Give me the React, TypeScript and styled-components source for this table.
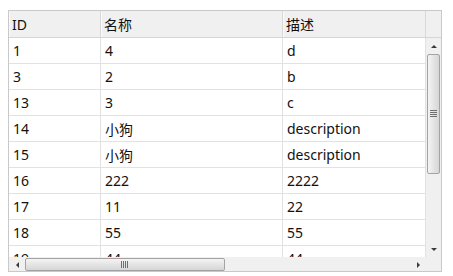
import React from "react";
import styled, { createGlobalStyle } from "styled-components";

const Global = createGlobalStyle`
  html, body { margin: 0; padding: 0; background: #ffffff; }
  body { font-family: "Noto Sans", "Noto Sans CJK SC", sans-serif; }
`;

const Page = styled.div`
  padding: 10px 11px 4px 8px;
`;

const Frame = styled.div`
  width: 434px;
  height: 262px;
  box-sizing: border-box;
  border: 1px solid #c9c9c9;
  display: grid;
  grid-template-columns: 417px 15px;
  grid-template-rows: 27px 219px 14px;
  overflow: hidden;
  background: #fff;
`;

const cols = "92px 182px 143px";

const HeaderRow = styled.div`
  display: grid;
  grid-template-columns: ${cols};
  background: #f0f0f0;
  border-bottom: 1px solid #d5d5d5;
`;

const HeaderCell = styled.div`
  border-right: 1px solid #d8d8d8;
  box-shadow: inset 1px 0 0 #fafafa;
  padding: 0 3px;
  display: flex;
  align-items: center;
  font-size: 14px;
  color: #111;
`;

const HeaderCorner = styled.div`
  background: #f0f0f0;
  border-bottom: 1px solid #d5d5d5;
`;

const Body = styled.div`
  overflow: hidden;
`;

const Row = styled.div`
  display: grid;
  grid-template-columns: ${cols};
  height: 26px;
  box-sizing: border-box;
  border-bottom: 1px solid #e2e2e2;
`;

const Cell = styled.div`
  border-right: 1px solid #e2e2e2;
  padding: 0 4px;
  display: flex;
  align-items: center;
  font-size: 14px;
  color: #111;
  white-space: nowrap;
`;

const VBar = styled.div`
  display: grid;
  grid-template-rows: 16px 1fr 16px;
  background: #f0f0f0;
`;

const VTrack = styled.div`
  padding: 0 1px 0 1px;
`;

const VThumb = styled.div`
  height: 120px;
  box-sizing: border-box;
  border: 1px solid #a3a3a3;
  border-radius: 2px;
  background: linear-gradient(to right, #f4f4f4 0%, #e6e6e6 45%, #d6d6d6 100%);
  display: flex;
  align-items: center;
  justify-content: center;
`;

const HBar = styled.div`
  display: grid;
  grid-template-columns: 16px 1fr 16px;
  background: #f0f0f0;
`;

const HTrack = styled.div`
  padding: 1px 0 0 0;
`;

const HThumb = styled.div`
  width: 200px;
  height: 13px;
  box-sizing: border-box;
  border: 1px solid #a3a3a3;
  border-radius: 2px;
  background: linear-gradient(to bottom, #f4f4f4 0%, #e6e6e6 45%, #d6d6d6 100%);
  display: flex;
  align-items: center;
  justify-content: center;
`;

const ArrowBox = styled.div`
  display: flex;
  align-items: center;
  justify-content: center;
`;

const Corner = styled.div`
  background: #f0f0f0;
`;

type Dir = "up" | "down" | "left" | "right";

const Arrow = ({ dir }: { dir: Dir }) => {
  const pts: Record<Dir, string> = {
    up: "1,5 4,2 7,5",
    down: "1,2 4,5 7,2",
    left: "5,1 2,4 5,7",
    right: "2,1 5,4 2,7",
  };
  return (
    <ArrowBox>
      <svg width="7" height="7" viewBox="0 0 7 7">
        <polygon points={pts[dir]} fill="#3a3a3a" />
      </svg>
    </ArrowBox>
  );
};

const Grip = ({ vertical }: { vertical: boolean }) =>
  vertical ? (
    <svg width="7" height="8" viewBox="0 0 7 8">
      {[0, 2, 4, 6].map((y) => (
        <rect key={y} x="0" y={y} width="7" height="1" fill="#6e6e6e" />
      ))}
    </svg>
  ) : (
    <svg width="8" height="7" viewBox="0 0 8 7">
      {[0, 2, 4, 6].map((x) => (
        <rect key={x} x={x} y="0" width="1" height="7" fill="#6e6e6e" />
      ))}
    </svg>
  );

const rows: [string, string, string][] = [
  ["1", "4", "d"],
  ["3", "2", "b"],
  ["13", "3", "c"],
  ["14", "小狗", "description"],
  ["15", "小狗", "description"],
  ["16", "222", "2222"],
  ["17", "11", "22"],
  ["18", "55", "55"],
  ["19", "44", "44"],
];

export default function App() {
  return (
    <Page>
      <Global />
      <Frame>
        <HeaderRow>
          <HeaderCell>ID</HeaderCell>
          <HeaderCell>名称</HeaderCell>
          <HeaderCell>描述</HeaderCell>
        </HeaderRow>
        <HeaderCorner />
        <Body>
          {rows.map((r, i) => (
            <Row key={i}>
              {r.map((c, j) => (
                <Cell key={j}>{c}</Cell>
              ))}
            </Row>
          ))}
        </Body>
        <VBar>
          <Arrow dir="up" />
          <VTrack>
            <VThumb>
              <Grip vertical />
            </VThumb>
          </VTrack>
          <Arrow dir="down" />
        </VBar>
        <HBar>
          <Arrow dir="left" />
          <HTrack>
            <HThumb>
              <Grip vertical={false} />
            </HThumb>
          </HTrack>
          <Arrow dir="right" />
        </HBar>
        <Corner />
      </Frame>
    </Page>
  );
}
